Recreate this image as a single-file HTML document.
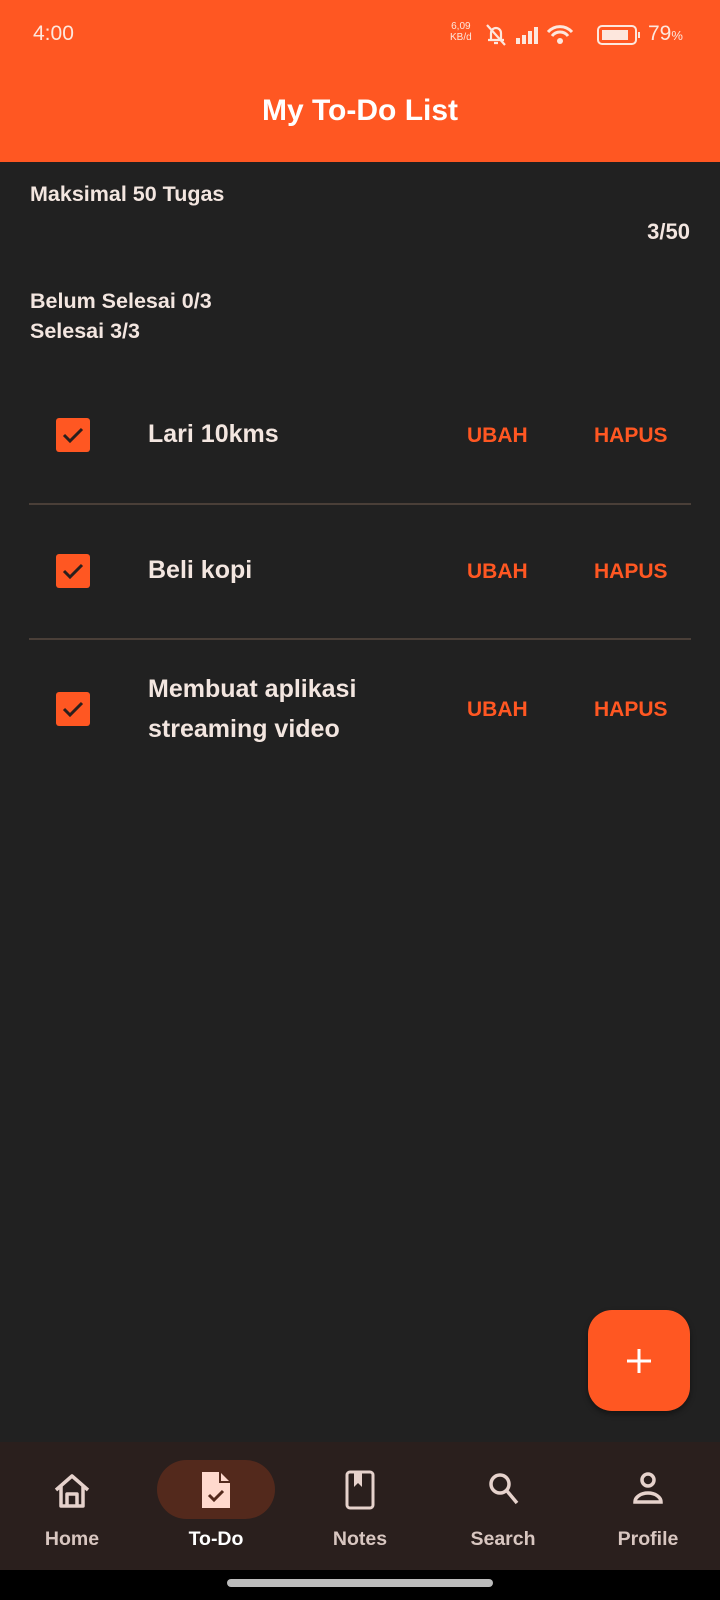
<!DOCTYPE html>
<html><head><meta charset="utf-8"><style>
body{margin:0;width:720px;height:1600px;background:#212121;font-family:"Liberation Sans",sans-serif;position:relative;overflow:hidden;color:#f3e6e0}
.a{position:absolute}
.hdr{left:0;top:0;width:720px;height:162px;background:#ff5722}
.t{font-weight:bold}
.or{color:#ff5722;font-weight:bold;font-size:21px}
.div{left:29px;width:662px;height:2px;background:#4a3f38}
.nav{left:0;top:1442px;width:720px;height:128px;background:#2a1f1d}
.lab{top:1528px;font-size:19.5px;font-weight:bold;color:#d8c6c0;width:120px;text-align:center}
</style></head><body>
<div class="a hdr"></div>
<div class="a" style="left:33px;top:22px;font-size:21px;color:#fde7dd">4:00</div>
<div class="a" style="left:450px;top:21px;font-size:10px;line-height:11px;color:#fde7dd;text-align:center">6,09<br>KB/d</div>
<svg class="a" style="left:484px;top:22px" width="210" height="26" viewBox="0 0 210 26">
<g stroke="#fde7dd" fill="none" stroke-width="2.2"><path d="M4 18h16M7 18V11a5 5 0 0 1 10 0v7M10 21h4M3 3l18 20"/></g>
<g fill="#fde7dd"><rect x="32" y="16" width="4" height="6"/><rect x="38" y="13" width="4" height="9"/><rect x="44" y="9" width="4" height="13"/><rect x="50" y="5" width="4" height="17"/></g>
<g stroke="#fde7dd" fill="none" stroke-width="3"><path d="M64 10a16 16 0 0 1 24 0M68 14a10 10 0 0 1 16 0"/></g><circle cx="76" cy="19" r="3" fill="#fde7dd"/>
<rect x="114" y="4" width="38" height="18" rx="4" stroke="#fde7dd" stroke-width="2" fill="none"/><rect x="118" y="8" width="26" height="10" fill="#fde7dd"/><rect x="154" y="10" width="2" height="6" fill="#fde7dd"/>
</svg>
<div class="a" style="left:648px;top:22px;font-size:21px;color:#fde7dd">79<span style="font-size:13px">%</span></div>
<div class="a t" style="left:0;width:720px;text-align:center;top:94px;font-size:30px;color:#fff">My To-Do List</div>
<div class="a t" style="left:30px;top:182px;font-size:21.5px">Maksimal 50 Tugas</div>
<div class="a t" style="right:30px;top:219px;font-size:22px">3/50</div>
<div class="a t" style="left:30px;top:289px;font-size:21.5px">Belum Selesai 0/3</div>
<div class="a t" style="left:30px;top:319px;font-size:21.5px">Selesai 3/3</div>

<svg width="0" height="0" style="position:absolute"><defs><g id="ck"><rect width="34" height="34" rx="3" fill="#ff5722"/><path d="M8 17l6 6 12-12" stroke="#2a1f1d" stroke-width="3" fill="none"/></g></defs></svg>
<svg class="a" style="left:56px;top:418px" width="34" height="34"><use href="#ck"/></svg>
<div class="a t" style="left:148px;top:420px;font-size:25px">Lari 10kms</div>
<div class="a or" style="left:467px;top:424px">UBAH</div><div class="a or" style="left:594px;top:424px">HAPUS</div>
<div class="a div" style="top:503px"></div>
<svg class="a" style="left:56px;top:554px" width="34" height="34"><use href="#ck"/></svg>
<div class="a t" style="left:148px;top:556px;font-size:25px">Beli kopi</div>
<div class="a or" style="left:467px;top:560px">UBAH</div><div class="a or" style="left:594px;top:560px">HAPUS</div>
<div class="a div" style="top:638px"></div>
<svg class="a" style="left:56px;top:692px" width="34" height="34"><use href="#ck"/></svg>
<div class="a t" style="left:148px;top:669px;font-size:25px;line-height:40px">Membuat aplikasi<br>streaming video</div>
<div class="a or" style="left:467px;top:698px">UBAH</div><div class="a or" style="left:594px;top:698px">HAPUS</div>

<div class="a" style="left:588px;top:1310px;width:102px;height:101px;border-radius:24px;background:#ff5722;box-shadow:0 3px 6px rgba(0,0,0,.4)"></div>
<svg class="a" style="left:624px;top:1346px" width="30" height="30"><path d="M15 3v24M3 15h24" stroke="#fff" stroke-width="3"/></svg>

<div class="a nav"></div>
<div class="a" style="left:157px;top:1460px;width:118px;height:59px;border-radius:30px;background:#53291c"></div>
<svg class="a" style="left:52px;top:1472px" width="40" height="38" viewBox="0 0 40 38"><path d="M4 18L20 4l16 14M9 14v20h22V14M15 34V22h10v12" stroke="#e6d2cc" stroke-width="3.5" fill="none" stroke-linejoin="round"/></svg>
<svg class="a" style="left:198px;top:1468px" width="36" height="44" viewBox="0 0 36 44"><path d="M4 4h18l10 10v26H4z" fill="#ffd9cd"/><path d="M22 4v10h10" stroke="#53291c" stroke-width="2" fill="none"/><path d="M11 27l5 5 9-9" stroke="#53291c" stroke-width="3" fill="none"/></svg>
<svg class="a" style="left:342px;top:1468px" width="36" height="44" viewBox="0 0 36 44"><rect x="5" y="4" width="26" height="36" rx="3" stroke="#e6d2cc" stroke-width="3" fill="none"/><path d="M12 5v14l4-4 4 4V5" fill="#e6d2cc"/></svg>
<svg class="a" style="left:486px;top:1470px" width="36" height="40" viewBox="0 0 36 40"><circle cx="14" cy="14" r="9" stroke="#e6d2cc" stroke-width="3.5" fill="none"/><path d="M21 21l10 12" stroke="#e6d2cc" stroke-width="3.5"/></svg>
<svg class="a" style="left:630px;top:1470px" width="36" height="40" viewBox="0 0 36 40"><circle cx="18" cy="10" r="6" stroke="#e6d2cc" stroke-width="3.5" fill="none"/><path d="M5 32a13 9 0 0 1 26 0z" stroke="#e6d2cc" stroke-width="3.5" fill="none"/></svg>
<div class="a lab" style="left:12px">Home</div>
<div class="a lab" style="left:156px;color:#fff">To-Do</div>
<div class="a lab" style="left:300px">Notes</div>
<div class="a lab" style="left:443px">Search</div>
<div class="a lab" style="left:588px">Profile</div>
<div class="a" style="left:0;top:1570px;width:720px;height:30px;background:#000"></div>
<div class="a" style="left:227px;top:1579px;width:266px;height:8px;border-radius:4px;background:#bcbcbc"></div>
</body></html>
